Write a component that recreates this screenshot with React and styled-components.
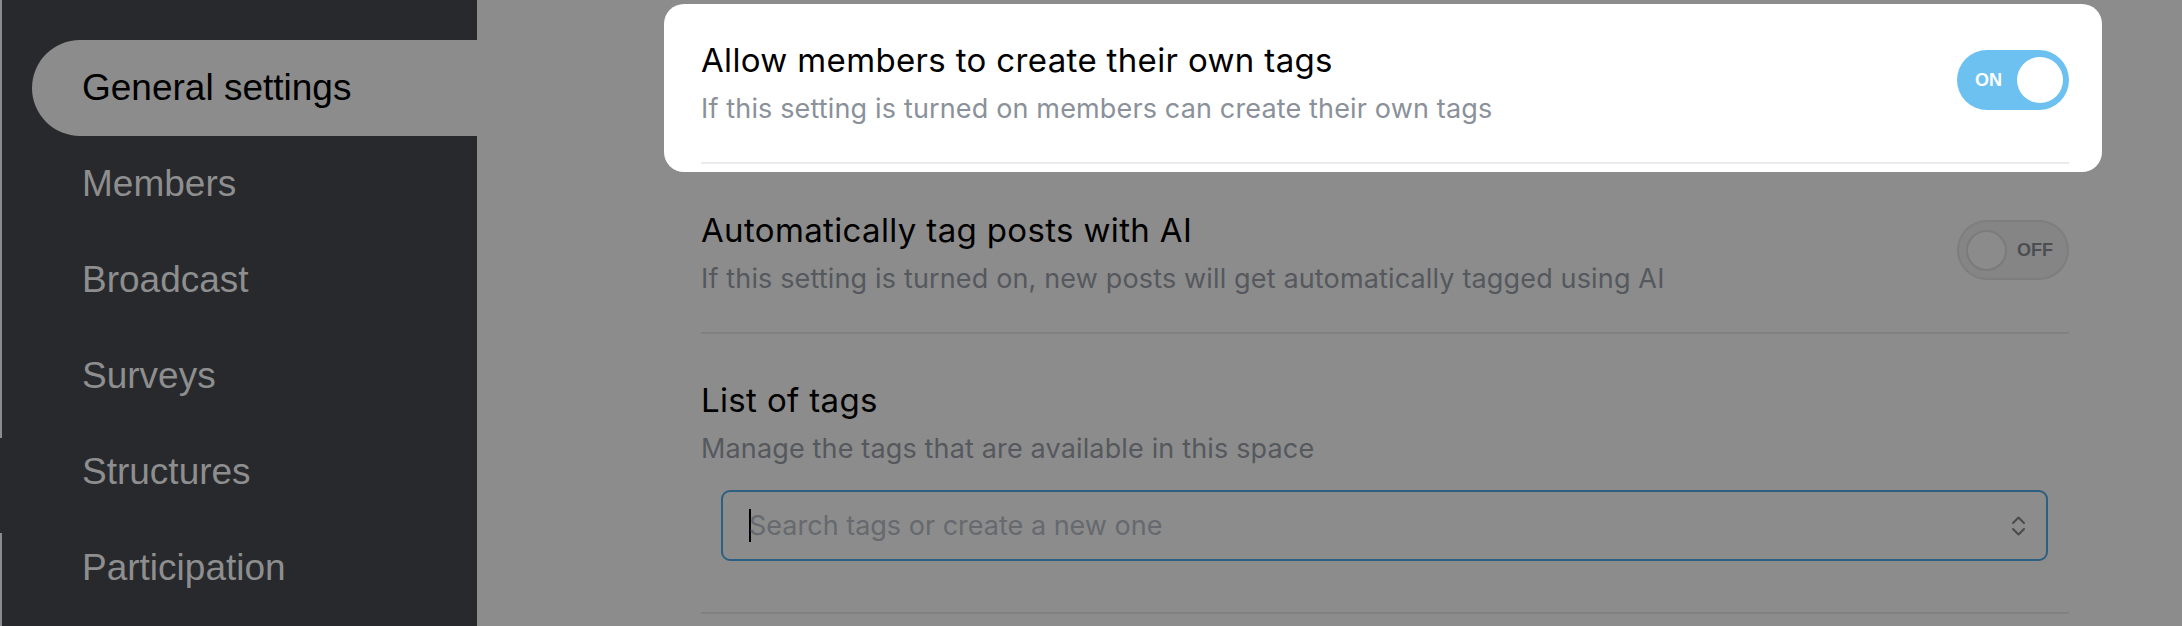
import styled, { createGlobalStyle } from "styled-components";

const GlobalStyle = createGlobalStyle`
  body {
    margin: 0;
    background: #8c8c8c;
  }
`;

const Page = styled.div`
  display: flex;
  height: 626px;
  overflow: hidden;
`;

const Sidebar = styled.nav`
  width: 477px;
  flex-shrink: 0;
  padding-top: 40px;
  box-sizing: border-box;
  background:
    linear-gradient(#27292d, #27292d) 0 438px / 2px 95px no-repeat,
    linear-gradient(to right, #8c8c8c 2px, #27292d 2px);
  font-family: "Liberation Sans", Arial, sans-serif;
`;

const NavItem = styled.div`
  height: 96px;
  margin-left: 32px;
  padding-left: 50px;
  display: flex;
  align-items: center;
  font-size: 37px;
  color: ${(p) => (p.active ? "#000" : "#8e8e8e")};
  background: ${(p) => (p.active ? "#8c8c8c" : "transparent")};
  border-radius: 48px 0 0 48px;
`;

const Main = styled.main`
  flex: 1;
  padding: 4px 0 0 224px;
  font-family: Inter, "Liberation Sans", sans-serif;
`;

const Column = styled.div`
  width: 1368px;
`;

const Spotlight = styled.div`
  background: #fff;
  border-radius: 20px;
  margin: 0 -33px -8px -37px;
  padding: 36px 33px 8px 37px;
  position: relative;
`;

const Row = styled.section`
  display: flex;
  align-items: center;
  padding: ${(p) => (p.first ? "0" : "46px")} 0 36px;
  border-bottom: 2px solid ${(p) => (p.light ? "#ebebef" : "#818181")};
`;

const Block = styled.div`
  flex: 1;
`;

const Title = styled.div`
  font-size: 33px;
  line-height: 40px;
  letter-spacing: 0.35px;
  color: #000;
`;

const Desc = styled.div`
  margin-top: 12px;
  font-size: 27px;
  line-height: 34px;
  letter-spacing: 0.15px;
  color: ${(p) => (p.light ? "#8a919a" : "#55585d")};
`;

const Toggle = styled.div`
  width: 112px;
  height: 60px;
  box-sizing: border-box;
  border-radius: 30px;
  margin-bottom: 6px;
  flex-shrink: 0;
  display: flex;
  align-items: center;
  justify-content: space-between;
  flex-direction: ${(p) => (p.on ? "row" : "row-reverse")};
  padding: ${(p) => (p.on ? "0 6px 0 18px" : "0 14px 0 7px")};
  background: ${(p) => (p.on ? "#6cc1f0" : "#858585")};
  border: ${(p) => (p.on ? "none" : "2px solid #7e7e7e")};
  font-family: "Liberation Sans", Arial, sans-serif;
  font-weight: 700;
  font-size: 18px;
  color: ${(p) => (p.on ? "#fff" : "#4b4e52")};
`;

const Knob = styled.span`
  width: ${(p) => (p.on ? "46px" : "41px")};
  height: ${(p) => (p.on ? "46px" : "41px")};
  box-sizing: border-box;
  border-radius: 50%;
  background: ${(p) => (p.on ? "#fff" : "#8b8b8b")};
  border: ${(p) => (p.on ? "none" : "2px solid #7b7b7b")};
`;

const TagPicker = styled.div`
  margin: 24px 21px 0 20px;
  height: 71px;
  box-sizing: border-box;
  border: 2px solid #2d5f80;
  border-radius: 9px;
  display: flex;
  align-items: center;
  padding: 0 20px 0 26px;
`;

const Caret = styled.span`
  width: 2px;
  height: 33px;
  background: #000;
  margin-right: -2px;
`;

const Placeholder = styled.span`
  flex: 1;
  font-size: 27px;
  color: #66696e;
`;

const ListBlock = styled.div`
  flex: 1;
  padding-bottom: 15px;
`;

function Switch({ on }) {
  return (
    <Toggle on={on ? 1 : 0}>
      <span>{on ? "ON" : "OFF"}</span>
      <Knob on={on ? 1 : 0} />
    </Toggle>
  );
}

function UpDown() {
  return (
    <svg width="15" height="22" viewBox="0 0 15 22" fill="none" stroke="#4a4a4a" strokeWidth="2" strokeLinecap="round" strokeLinejoin="round">
      <path d="M2 8l5.5-5.5L13 8" />
      <path d="M2 14l5.5 5.5L13 14" />
    </svg>
  );
}

const navItems = ["General settings", "Members", "Broadcast", "Surveys", "Structures", "Participation"];

export default function App() {
  return (
    <Page>
      <GlobalStyle />
      <Sidebar>
        {navItems.map((item, i) => (
          <NavItem key={item} active={i === 0}>
            {item}
          </NavItem>
        ))}
      </Sidebar>
      <Main>
        <Column>
          <Spotlight>
            <Row first light>
              <Block>
                <Title>Allow members to create their own tags</Title>
                <Desc light>If this setting is turned on members can create their own tags</Desc>
              </Block>
              <Switch on />
            </Row>
          </Spotlight>
          <Row>
            <Block>
              <Title>Automatically tag posts with AI</Title>
              <Desc>If this setting is turned on, new posts will get automatically tagged using AI</Desc>
            </Block>
            <Switch />
          </Row>
          <Row>
            <ListBlock>
              <Title>List of tags</Title>
              <Desc>Manage the tags that are available in this space</Desc>
              <TagPicker>
                <Caret />
                <Placeholder>Search tags or create a new one</Placeholder>
                <UpDown />
              </TagPicker>
            </ListBlock>
          </Row>
        </Column>
      </Main>
    </Page>
  );
}
